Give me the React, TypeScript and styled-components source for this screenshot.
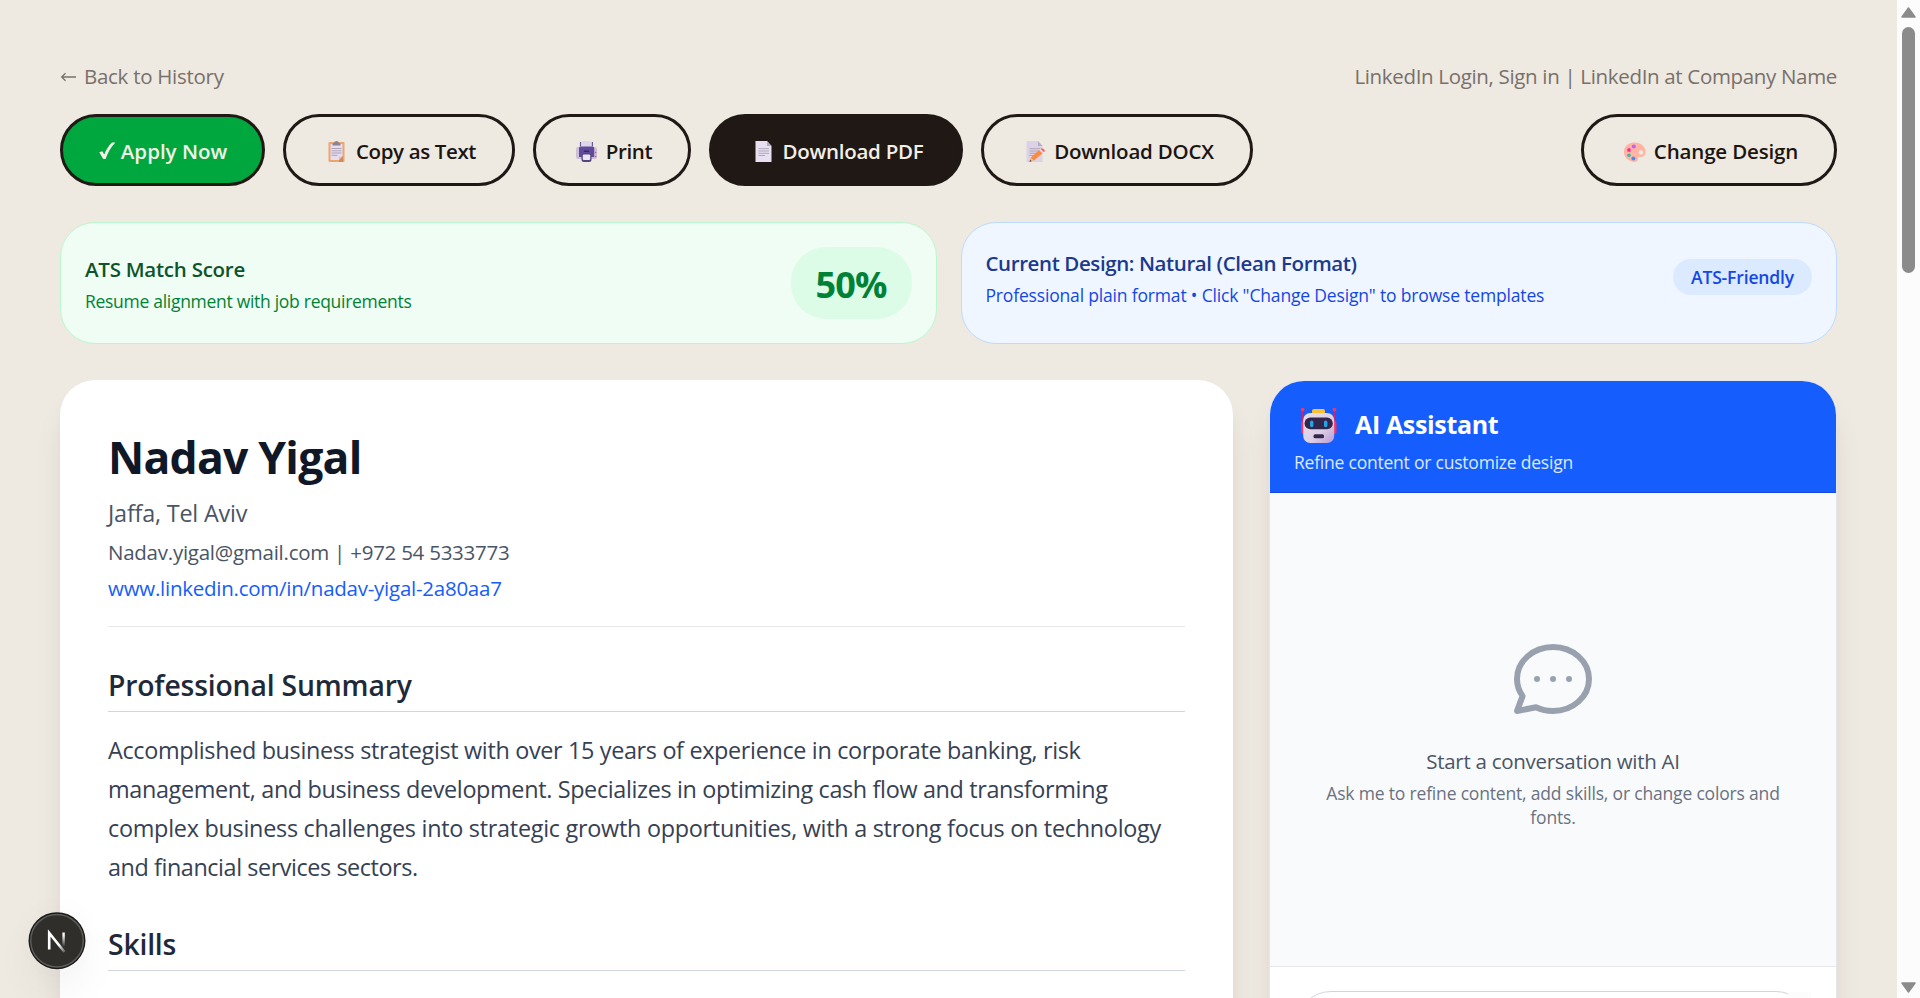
import React from "react";
import styled, { createGlobalStyle, css } from "styled-components";

const GlobalStyle = createGlobalStyle`
  * { box-sizing: border-box; }
  body {
    margin: 0;
    background: #eee9e1;
    font-family: "Open Sans", "Noto Sans", sans-serif;
    font-size: 20.5px;
  }
  h1, h2, h3, p { margin: 0; }
  button { font: inherit; }
  svg { display: block; flex: none; }
`;

/* ---------- page frame ---------- */

const Window = styled.div`
  display: flex;
  height: 998px;
  overflow: hidden;
`;

const Page = styled.main`
  flex: 1;
  min-width: 0;
  padding: 61px 60px 0;
`;

const ScrollTrack = styled.aside`
  width: 23px;
  background: #fcfcfc;
  display: flex;
  flex-direction: column;
  align-items: center;
  justify-content: space-between;
  padding: 7px 0 5px;
`;

const ScrollThumb = styled.div`
  width: 13px;
  height: 246px;
  margin: 9px 0 auto;
  border-radius: 7px;
  background: #8b8b8b;
`;

/* ---------- header ---------- */

const TopLine = styled.header`
  display: flex;
  justify-content: space-between;
  line-height: 30px;
  color: #79706b;
  margin-bottom: 23px;
`;

const BackLink = styled.a`
  display: flex;
  align-items: center;
  gap: 8px;
  letter-spacing: -0.28px;
`;

const JobTitle = styled.span`
  letter-spacing: -0.33px;
`;

const Toolbar = styled.nav`
  display: flex;
  gap: 18px;
  margin-bottom: 36px;
`;

const ActionButton = styled.button<{
  $width: number;
  $tone?: "apply" | "solid";
  $end?: boolean;
  $track?: number;
}>`
  width: ${(p) => p.$width}px;
  height: 72px;
  display: flex;
  align-items: center;
  justify-content: center;
  gap: 6px;
  padding: 2px 0 0 1px;
  border: 3px solid #1f1814;
  border-radius: 36px;
  background: transparent;
  color: #1b1512;
  font-weight: 600;
  white-space: nowrap;
  letter-spacing: ${(p) => p.$track ?? 0}px;
  ${(p) =>
    p.$tone === "apply" &&
    css`
      gap: 5px;
      background: #00a63e;
      color: #f3f1e8;
    `}
  ${(p) =>
    p.$tone === "solid" &&
    css`
      background: #1f1814;
      color: #f3eee6;
    `}
  ${(p) => p.$end && "margin-left: auto;"}
`;

/* ---------- status cards ---------- */

const StatusRow = styled.section`
  display: grid;
  grid-template-columns: 1fr 1fr;
  gap: 24px;
  margin-bottom: 36px;
`;

const StatusCard = styled.div<{ $tone: "green" | "blue" }>`
  height: 122px;
  padding: 24px;
  border: 1px solid ${(p) => (p.$tone === "green" ? "#b9f8cf" : "#bedbff")};
  border-radius: 35px;
  background: ${(p) => (p.$tone === "green" ? "#f0fdf4" : "#eff6ff")};
`;

const StatusBody = styled.div`
  display: flex;
  align-items: center;
  justify-content: space-between;
`;

const StatusTitle = styled.h3<{ $color: string; $track: number }>`
  font-size: 20.5px;
  line-height: 30px;
  font-weight: 600;
  color: ${(p) => p.$color};
  letter-spacing: ${(p) => p.$track}px;
  padding: 1px 0;
`;

const StatusNote = styled.p<{ $color: string; $track: number }>`
  font-size: 17.5px;
  line-height: 25px;
  margin-top: 4px;
  margin-bottom: -1px;
  color: ${(p) => p.$color};
  letter-spacing: ${(p) => p.$track}px;
`;

const ScoreBadge = styled.div`
  width: 121px;
  height: 72px;
  display: grid;
  place-items: center;
  padding-top: 2px;
  border-radius: 35px;
  background: #dcfce7;
  color: #008236;
  font-size: 36px;
  font-weight: 700;
  letter-spacing: -0.9px;
`;

const FormatBadge = styled.div`
  width: 139px;
  height: 36px;
  display: grid;
  place-items: center;
  border-radius: 18px;
  background: #dbeafe;
  color: #1447e6;
  font-size: 17.5px;
  font-weight: 600;
  letter-spacing: -0.15px;
`;

/* ---------- content columns ---------- */

const Columns = styled.section`
  display: grid;
  grid-template-columns: 1173px 568px;
  gap: 36px;
`;

const cardShadow = css`
  box-shadow: 0 25px 32px -6px rgba(50, 30, 10, 0.1), 0 10px 13px -8px rgba(50, 30, 10, 0.1);
`;

const ResumeCard = styled.article`
  height: 900px;
  padding: 49px 48px;
  border-radius: 35px;
  background: #fff;
  ${cardShadow}
`;

const ResumeHeader = styled.div`
  height: 198px;
  border-bottom: 1px solid #e5e7eb;
`;

const PersonName = styled.h1`
  font-size: 44.5px;
  line-height: 56px;
  font-weight: 700;
  letter-spacing: -0.77px;
  color: #101828;
  margin-bottom: 9px;
`;

const Location = styled.p`
  font-size: 23.4px;
  line-height: 39px;
  letter-spacing: -0.2px;
  color: #4a5565;
  margin-bottom: 1px;
`;

const ContactLine = styled.p<{ $link?: boolean }>`
  line-height: 36px;
  color: ${(p) => (p.$link ? "#155dfc" : "#4a5565")};
  letter-spacing: -0.25px;
`;

const SectionTitle = styled.h2`
  margin-top: 39px;
  padding-bottom: 7px;
  border-bottom: 1px solid #d1d5dc;
  font-size: 28.3px;
  line-height: 38px;
  font-weight: 600;
  letter-spacing: -0.17px;
  color: #1e2939;

  p + & { margin-top: 38px; }
`;

const Summary = styled.p`
  margin-top: 19px;
  font-size: 23.4px;
  line-height: 39px;
  color: #364153;
  white-space: nowrap;
`;

const SummaryLine = styled.span<{ $track: number }>`
  display: block;
  letter-spacing: ${(p) => p.$track}px;
`;

/* ---------- assistant ---------- */

const AssistantCard = styled.aside`
  height: 900px;
  border: 1px solid #e5e7eb;
  border-radius: 35px;
  background: #fff;
  overflow: hidden;
  ${cardShadow}
`;

const AssistantHeader = styled.div`
  height: 112px;
  padding: 24px 23px 0;
  border-bottom: 1px solid #1447e6;
  background: #155dfc;
`;

const AssistantTitle = styled.h2`
  display: flex;
  align-items: center;
  gap: 13px;
  font-size: 25px;
  line-height: 38px;
  font-weight: 700;
  letter-spacing: -0.35px;
  color: #fff;
`;

const AssistantNote = styled.p`
  margin-top: 7px;
  padding-left: 1px;
  font-size: 17.5px;
  line-height: 25px;
  letter-spacing: -0.22px;
  color: #dbeafe;
`;

const ChatArea = styled.div`
  height: 474px;
  padding-top: 138px;
  display: flex;
  flex-direction: column;
  align-items: center;
  background: #f9fafb;
  border-bottom: 1px solid #e5e7eb;
`;

const EmptyTitle = styled.p`
  margin-top: 19px;
  line-height: 30px;
  letter-spacing: -0.28px;
  color: #4a5565;
`;

const EmptyNote = styled.p`
  margin-top: 5px;
  font-size: 17.5px;
  line-height: 24px;
  letter-spacing: -0.18px;
  text-align: center;
  color: #6a7282;
`;

const Composer = styled.div`
  padding: 24px 25px 0 26px;
`;

const MessageInput = styled.div`
  height: 90px;
  display: flex;
  justify-content: flex-end;
  border: 1px solid #d1d5dc;
  border-radius: 35px;
`;

const InputScroll = styled.div`
  width: 23px;
  height: 88px;
  margin-right: -1px;
  background: #fcfcfc;
`;

/* ---------- floating badge ---------- */

const DevBadge = styled.div`
  position: fixed;
  left: 28px;
  top: 912px;
  width: 58px;
  height: 58px;
  border-radius: 50%;
  box-shadow: 0 20px 40px rgba(0, 0, 0, 0.05), 0 0 30px rgba(0, 0, 0, 0.03);
`;

/* ---------- drawings ---------- */

const ArrowLeft = () => (
  <svg width="16" height="12" viewBox="0 0 16 12" fill="none" stroke="currentColor" strokeWidth="1.3">
    <path d="M16 7H1.700M5.500 3.200L1.700 7L5.500 10.800" />
  </svg>
);

const Check = () => (
  <svg width="17" height="18" viewBox="0 0 17 18" fill="currentColor">
    <path d="M0.3 10.2L3.3 9.2L5.3 12.6C7 8 9.6 3.7 13 .6H16.4C12 5 8.8 10.600 6.600 17H4.200Z" />
  </svg>
);

const ClipboardIcon = () => (
  <svg width="27" height="24" viewBox="0 0 27 24">
    <rect x="5.500" y="3" width="16" height="20" rx="1" fill="#eda56f" />
    <path d="M7.500 5H19.500V17.500L16 21H7.500Z" fill="#e6def0" />
    <path d="M16 21V17.500H19.500Z" fill="#cfc4df" />
    <path d="M16 21L20 17V23H16Z" fill="#d8895a" />
    <path d="M9.500 6.500V5Q9.500 4 11 4Q11.500 2 13.500 2T16 4Q17.500 4 17.500 5V6.500Z" fill="#8c838f" />
    <path d="M8.500 9.500H18.500M8.500 11.800H18.500M8.500 14H18.500M8.500 16.300H14.500" stroke="#aca1b8" strokeWidth="1" />
  </svg>
);

const PrinterIcon = () => (
  <svg width="27" height="24" viewBox="0 0 27 24">
    <rect x="8.500" y="2" width="10" height="8" rx="2" fill="#ded6e8" />
    <rect x="3" y="8" width="21" height="12" rx="2" fill="#cbc0d8" />
    <path d="M6 9Q6 7.500 7.500 7.500H19.500Q21.200 7.500 21.200 9V18H6Z" fill="#5f4a9b" />
    <path d="M7.500 3V7.500M19.400 3V7.500" stroke="#6b5a9c" strokeWidth="1.200" />
    <rect x="11" y="11.500" width="5" height="1.500" fill="#382a60" />
    <rect x="8.500" y="14" width="10" height="9" rx="2.500" fill="#574580" />
    <rect x="9.800" y="15.500" width="7.400" height="5.500" rx="1" fill="#ece6f3" />
    <circle cx="22.600" cy="13.500" r=".8" fill="#f0487f" />
    <circle cx="22.600" cy="17.500" r=".8" fill="#e24c8f" />
  </svg>
);

const Sheet = ({ shade }: { shade: string }) => (
  <>
    <path d="M5.500 2H17L21.500 7V23H5.500Z" fill={shade} />
    <path d="M17 2L21.500 7H17Z" fill="#b6acc1" />
    <path d="M8.500 9.700H19M8.500 12H19M8.500 14.300H19M8.500 16.500H15" stroke="#b0a6bb" strokeWidth="1" />
  </>
);

const PageIcon = () => (
  <svg width="27" height="24" viewBox="0 0 27 24">
    <Sheet shade="#e8e0f2" />
  </svg>
);

const MemoIcon = () => (
  <svg width="27" height="24" viewBox="0 0 27 24">
    <Sheet shade="#dbd3e5" />
    <path d="M8.500 22.800L10 18.500L18.200 11L21.500 14.300L13 21.500Z" fill="#fb8b3c" />
    <path d="M10 18.500L8.500 22.800L13 21.500Z" fill="#f2b98c" />
    <path d="M8.500 22.800L9.200 20.800L10.600 22.200Z" fill="#4a3c48" />
    <path d="M18.200 11L19.500 9.800L22.800 13.100L21.500 14.300Z" fill="#e3d9ea" />
    <path d="M19.500 9.800L20.500 9.200Q24 10 23.800 12.200L22.800 13.100Z" fill="#fb5a55" />
  </svg>
);

const PaletteIcon = () => (
  <svg width="27" height="24" viewBox="0 0 27 24">
    <path
      d="M13 3.500C19.500 3 24.800 7.500 24.500 13C24.300 17.500 21 18.500 17.500 18C16 18.200 17.500 20 16.500 21.500C15.500 23.500 11.500 23.300 8.500 21.500C4.500 19.500 2.500 16 3 12C3.500 7 7.500 3.800 13 3.500Z"
      fill="#ffb5a3"
    />
    <circle cx="20" cy="13.500" r="2.200" fill="#f1e9df" />
    <circle cx="12.800" cy="7.500" r="2" fill="#c35cf0" />
    <circle cx="8" cy="11" r="1.900" fill="#f9338e" />
    <circle cx="8" cy="16.300" r="1.800" fill="#35b9ae" />
    <circle cx="12.400" cy="19.500" r="2" fill="#4290f6" />
  </svg>
);

const RobotIcon = () => (
  <svg width="49" height="38" viewBox="0 0 49 38">
    <defs>
      <linearGradient id="robotFace" x1="0" y1="0" x2="1" y2="1">
        <stop offset="0" stopColor="#e9dfea" />
        <stop offset=".6" stopColor="#dccfe5" />
        <stop offset="1" stopColor="#b898d6" />
      </linearGradient>
    </defs>
    <path d="M9.500 5V18M41.600 5V18" stroke="#c22a80" strokeWidth="1.200" />
    <circle cx="9.700" cy="4.600" r="1.900" fill="#ff2f62" />
    <circle cx="41.500" cy="4.600" r="1.900" fill="#ff2f62" />
    <rect x="8" y="16" width="5" height="13" rx="2" fill="#f92f60" />
    <rect x="38.500" y="16" width="5" height="13" rx="2" fill="#f92f60" />
    <rect x="19" y="4" width="13" height="5" rx="2" fill="#fdc22d" />
    <rect x="10.200" y="8" width="31" height="30" rx="7" fill="url(#robotFace)" />
    <rect x="11.500" y="12.600" width="28.300" height="11.600" rx="5.800" fill="#33264c" />
    <rect x="17" y="15.600" width="3.400" height="6.600" rx="1.700" fill="#22a5e8" />
    <rect x="31" y="15.600" width="3.400" height="6.600" rx="1.700" fill="#22a5e8" />
    <rect x="20.500" y="29.300" width="10.500" height="4" rx="1.600" fill="#36284d" />
  </svg>
);

const ChatBubble = () => (
  <svg width="96" height="96" viewBox="0 0 24 24" fill="none" stroke="#99a1af" strokeWidth="1.5" strokeLinecap="round" strokeLinejoin="round">
    <path d="M8 12h.01M12 12h.01M16 12h.01M21 12c0 4.418-4.03 8-9 8a9.863 9.863 0 01-4.255-.949L3 20l1.395-3.72C3.512 15.042 3 13.574 3 12c0-4.418 4.03-8 9-8s9 3.582 9 8z" />
  </svg>
);

const DevLogo = () => (
  <svg width="58" height="58" viewBox="0 0 58 58" fill="none">
    <defs>
      <linearGradient id="logoStem" x1="0" y1="20" x2="0" y2="35" gradientUnits="userSpaceOnUse">
        <stop offset=".2" stopColor="#fff" />
        <stop offset="1" stopColor="#fff" stopOpacity="0" />
      </linearGradient>
      <linearGradient id="logoSlash" x1="30" y1="30" x2="38" y2="41" gradientUnits="userSpaceOnUse">
        <stop offset=".2" stopColor="#fff" />
        <stop offset="1" stopColor="#fff" stopOpacity="0.1" />
      </linearGradient>
    </defs>
    <circle cx="29" cy="28.700" r="28.500" fill="#1a1a19" />
    <circle cx="29" cy="28.700" r="26.300" fill="#2f2e2b" stroke="#5d5c5a" strokeWidth="1.500" />
    <path d="M21.200 37.500V21L36.500 40" stroke="url(#logoSlash)" strokeWidth="2.600" />
    <path d="M35.600 20.500V34.500" stroke="url(#logoStem)" strokeWidth="2.400" />
  </svg>
);

const ScrollArrow = ({ down }: { down?: boolean }) => (
  <svg width="15" height="11" viewBox="0 0 15 11" fill="#8b8b8b" stroke="#8b8b8b" strokeWidth="1.500" strokeLinejoin="round">
    <path d={down ? "M1 1H14L7.500 10Z" : "M1 10H14L7.500 1Z"} />
  </svg>
);

export default function App() {
  return (
    <>
      <GlobalStyle />
      <Window>
        <Page>
          <TopLine>
            <BackLink>
              <ArrowLeft />
              Back to History
            </BackLink>
            <JobTitle>LinkedIn Login, Sign in | LinkedIn at Company Name</JobTitle>
          </TopLine>

          <Toolbar>
            <ActionButton $width={205} $tone="apply" $track={0}>
              <Check />
              Apply Now
            </ActionButton>
            <ActionButton $width={232} $track={-0.36}>
              <ClipboardIcon />
              Copy as Text
            </ActionButton>
            <ActionButton $width={158} $track={-0.35}>
              <PrinterIcon />
              Print
            </ActionButton>
            <ActionButton $width={254} $tone="solid" $track={-0.27}>
              <PageIcon />
              Download PDF
            </ActionButton>
            <ActionButton $width={272} $track={-0.22}>
              <MemoIcon />
              Download DOCX
            </ActionButton>
            <ActionButton $width={256} $end $track={-0.16}>
              <PaletteIcon />
              Change Design
            </ActionButton>
          </Toolbar>

          <StatusRow>
            <StatusCard $tone="green">
              <StatusBody>
                <div>
                  <StatusTitle $color="#0d542b" $track={-0.25}>
                    ATS Match Score
                  </StatusTitle>
                  <StatusNote $color="#008236" $track={-0.29}>
                    Resume alignment with job requirements
                  </StatusNote>
                </div>
                <ScoreBadge>50%</ScoreBadge>
              </StatusBody>
            </StatusCard>
            <StatusCard $tone="blue">
              <StatusBody>
                <div>
                  <StatusTitle $color="#1c398e" $track={-0.4}>
                    Current Design: Natural (Clean Format)
                  </StatusTitle>
                  <StatusNote $color="#1447e6" $track={-0.17}>
                    Professional plain format • Click "Change Design" to browse templates
                  </StatusNote>
                </div>
                <FormatBadge>ATS-Friendly</FormatBadge>
              </StatusBody>
            </StatusCard>
          </StatusRow>

          <Columns>
            <ResumeCard>
              <ResumeHeader>
                <PersonName>Nadav Yigal</PersonName>
                <Location>Jaffa, Tel Aviv</Location>
                <ContactLine>Nadav.yigal@gmail.com | +972 54 5333773</ContactLine>
                <ContactLine $link>www.linkedin.com/in/nadav-yigal-2a80aa7</ContactLine>
              </ResumeHeader>
              <SectionTitle>Professional Summary</SectionTitle>
              <Summary>
                <SummaryLine $track={-0.34}>
                  Accomplished business strategist with over 15 years of experience in corporate banking, risk
                </SummaryLine>
                <SummaryLine $track={-0.35}>
                  management, and business development. Specializes in optimizing cash flow and transforming
                </SummaryLine>
                <SummaryLine $track={-0.27}>
                  complex business challenges into strategic growth opportunities, with a strong focus on technology
                </SummaryLine>
                <SummaryLine $track={-0.43}>and financial services sectors.</SummaryLine>
              </Summary>
              <SectionTitle>Skills</SectionTitle>
            </ResumeCard>

            <AssistantCard>
              <AssistantHeader>
                <AssistantTitle>
                  <RobotIcon />
                  AI Assistant
                </AssistantTitle>
                <AssistantNote>Refine content or customize design</AssistantNote>
              </AssistantHeader>
              <ChatArea>
                <ChatBubble />
                <EmptyTitle>Start a conversation with AI</EmptyTitle>
                <EmptyNote>
                  Ask me to refine content, add skills, or change colors and
                  <br />
                  fonts.
                </EmptyNote>
              </ChatArea>
              <Composer>
                <MessageInput>
                  <InputScroll />
                </MessageInput>
              </Composer>
            </AssistantCard>
          </Columns>
        </Page>

        <ScrollTrack>
          <ScrollArrow />
          <ScrollThumb />
          <ScrollArrow down />
        </ScrollTrack>
      </Window>
      <DevBadge>
        <DevLogo />
      </DevBadge>
    </>
  );
}
